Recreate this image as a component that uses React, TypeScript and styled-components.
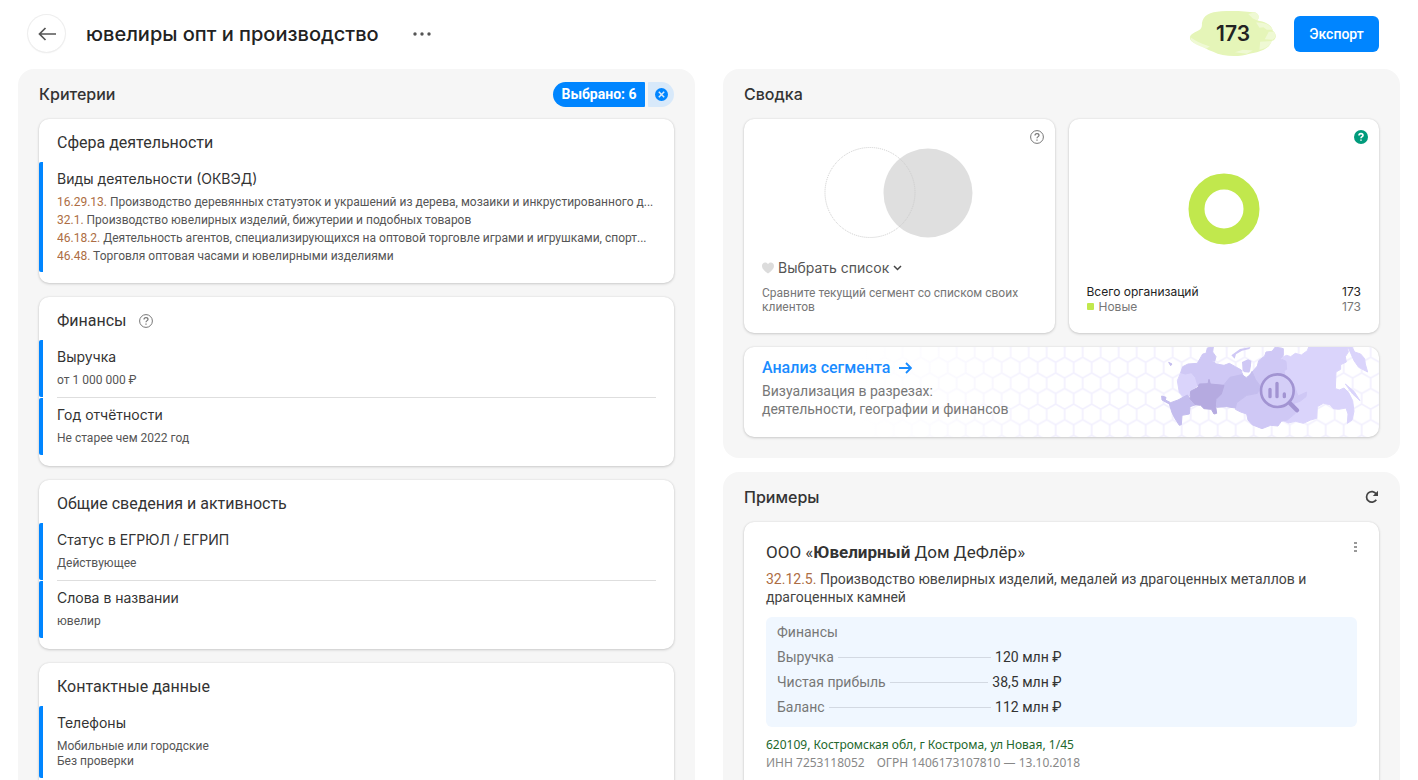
import React from "react";
import styled, { createGlobalStyle, css } from "styled-components";

const inter = `Inter, "Liberation Sans", sans-serif`;
const roboto = `Roboto, "Liberation Sans", sans-serif`;
const blue = "#0085ff";

const GlobalStyle = createGlobalStyle`
  *, *::before, *::after { box-sizing: border-box; }
  body { margin: 0; background: #fff; color: #333; font: 14px/18px ${roboto}; }
  h1, h2, h3, h4, p, dl, dd, ul { margin: 0; padding: 0; font-weight: 400; }
  ul { list-style: none; }
  button { border: 0; padding: 0; background: none; color: inherit; font: inherit; cursor: pointer; }
  svg { display: block; }
`;

const Page = styled.div`
  display: flex;
  flex-direction: column;
  height: 100vh;
  overflow: hidden;
`;

const Header = styled.header`
  display: flex;
  align-items: center;
  flex: none;
  height: 69px;
  padding: 0 39px 2px 28px;
`;

const BackButton = styled.button`
  display: grid;
  place-items: center;
  width: 37px;
  height: 37px;
  border-radius: 50%;
  box-shadow: 0 0 0 1px #eee, 0 1px 2px rgba(0, 0, 0, 0.08);
`;

const PageTitle = styled.h1`
  margin-left: 21px;
  font: 500 20px/28px ${inter};
  color: #222;
`;

const MoreButton = styled.button`
  display: grid;
  place-items: center;
  width: 32px;
  height: 32px;
  margin-left: 27px;
`;

const Count = styled.output`
  position: relative;
  display: grid;
  place-items: center;
  width: 88px;
  height: 47px;
  margin: 0 17px 0 auto;
  font: 600 21px/28px ${inter};
  color: #222;
`;

const CountBlob = styled.svg`
  position: absolute;
  inset: 0;
  z-index: -1;
`;

const ExportButton = styled.button`
  width: 85px;
  height: 36px;
  border-radius: 6px;
  background: ${blue};
  color: #fff;
  font-weight: 500;
`;

const Columns = styled.main`
  display: grid;
  grid-template-columns: 1fr 1fr;
  gap: 28px;
  flex: 1;
  min-height: 0;
  padding: 0 18px;
`;

const Column = styled.div`
  display: flex;
  flex-direction: column;
  gap: 14px;
  min-width: 0;
`;

const Panel = styled.section`
  flex: none;
  padding: 0 21px 21px;
  border-radius: 16px;
  background: #f6f6f6;
`;

const PanelHeader = styled.header`
  display: flex;
  align-items: center;
  justify-content: space-between;
  height: 50px;
`;

const PanelTitle = styled.h2`
  font: 500 16px/20px ${inter};
  color: #333;
`;

const Stack = styled.div`
  display: grid;
  gap: 14px;
`;

const cardSurface = css`
  border-radius: 10px;
  background: #fff;
  box-shadow: 0 0 2px rgba(0, 0, 0, 0.1), 0 1px 3px rgba(0, 0, 0, 0.16);
`;

const Card = styled.section`
  ${cardSurface}
  padding-bottom: 11px;
`;

const CardTitle = styled.h3`
  display: flex;
  align-items: center;
  gap: 12px;
  height: 43px;
  padding: 4px 18px 0;
  font-size: 16px;
  line-height: 20px;
`;

const Selection = styled.div`
  display: flex;
  gap: 3px;
  height: 25px;
`;

const SelectedButton = styled.button`
  width: 92px;
  border-radius: 13px 1px 1px 13px;
  background: ${blue};
  color: #fff;
  font-weight: 700;
`;

const ClearButton = styled.button`
  display: grid;
  place-items: center;
  width: 26px;
  border-radius: 1px 13px 13px 1px;
  background: #d8e9fa;
`;

const Criterion = styled.div<{ $dense?: boolean }>`
  padding: 7px 14px ${(p) => (p.$dense ? 7 : 9)}px;
  border-left: 4px solid ${blue};
  border-radius: 2px;
`;

const Divider = styled.hr`
  height: 1px;
  margin: 0 18px;
  border: 0;
  background: #dedede;
`;

const CriterionTitle = styled.h4`
  font: 14px/20px ${inter};
`;

const Values = styled.ul<{ $dense?: boolean }>`
  margin-top: ${(p) => (p.$dense ? 4 : 6)}px;
  font-size: 12px;
  line-height: ${(p) => (p.$dense ? 18 : 15)}px;
  color: #555;
`;

const Value = styled.li`
  overflow: hidden;
  text-overflow: ellipsis;
  white-space: nowrap;
`;

const Code = styled.span`
  color: #ad6d43;
`;

const HelpButton = styled.button`
  width: 14px;
  height: 14px;
`;

const SummaryGrid = styled.div`
  display: grid;
  grid-template-columns: 1fr 1fr;
  gap: 14px;
`;

const SummaryCard = styled.section`
  ${cardSurface}
  display: flex;
  flex-direction: column;
  height: 214px;
  padding: 11px 11px 18px 18px;
`;

const CornerRow = styled.div`
  display: flex;
  justify-content: flex-end;
`;

const Venn = styled.svg`
  align-self: center;
  margin: 3px 9px 0 0;
`;

const Donut = styled.svg`
  align-self: center;
  margin: 29px 7px 0 0;
`;

const ListButton = styled.button`
  display: flex;
  align-items: center;
  gap: 4px;
  margin-top: 19px;
  font: 14px/20px ${inter};
  color: #555;
`;

const Hint = styled.p`
  margin-top: 8px;
  font-size: 12px;
  line-height: 14px;
  color: #777;
`;

const Legend = styled.dl`
  margin: auto 7px 1px 0;
  font: 12px/15px ${inter};
`;

const LegendRow = styled.div<{ $muted?: boolean }>`
  display: flex;
  justify-content: space-between;
  color: ${(p) => (p.$muted ? "#777" : "#222")};
`;

const LegendName = styled.dt`
  display: flex;
  align-items: center;
  gap: 5px;
`;

const Swatch = styled.span`
  width: 7px;
  height: 7px;
  border-radius: 1px;
  background: #c1e84d;
`;

const Banner = styled.section`
  ${cardSurface}
  position: relative;
  overflow: hidden;
  height: 90px;
  padding: 11px 18px;
  color: #777;
`;

const BannerArt = styled.svg`
  position: absolute;
  top: 0;
  right: 0;
`;

const BannerBody = styled.div`
  position: relative;
`;

const BannerLink = styled.a`
  display: inline-flex;
  align-items: center;
  gap: 8px;
  margin-bottom: 4px;
  color: #1a8cff;
  font-size: 16px;
  font-weight: 500;
  line-height: 20px;
  text-decoration: none;
`;

const IconButton = styled.button`
  display: grid;
  place-items: center;
  width: 14px;
  height: 18px;
`;

const Company = styled.article`
  ${cardSurface}
  padding: 20px 22px 21px;
`;

const CompanyHead = styled.header`
  display: flex;
  justify-content: space-between;
  align-items: flex-start;
`;

const CompanyName = styled.h3`
  font-size: 17px;
  line-height: 20px;
`;

const MenuButton = styled.button`
  width: 4px;
  height: 10px;
`;

const Activity = styled.p`
  margin-top: 8px;
  color: #444;
`;

const Finance = styled.section`
  margin-top: 11px;
  padding: 5px 11px 7px;
  border-radius: 6px;
  background: #f0f7ff;
`;

const FinanceTitle = styled.h4`
  margin-bottom: 3px;
  line-height: 20px;
  color: #777;
`;

const FinanceList = styled.dl`
  width: 50%;
  line-height: 25px;
`;

const FinanceRow = styled.div`
  display: flex;
  align-items: center;
  gap: 4px;
`;

const FinanceName = styled.dt`
  color: #777;
`;

const Leader = styled.span`
  flex: 1;
  height: 1px;
  background: #d3d9e2;
`;

const Contacts = styled.div`
  margin-top: 9px;
  font: 12px/18px "Noto Sans", sans-serif;
`;

const Address = styled.p`
  color: #22672c;
`;

const Registry = styled.p`
  display: flex;
  gap: 12px;
  color: #888;
`;

function Help({ filled }: { filled?: boolean }) {
  return (
    <HelpButton type="button" aria-label="Подсказка">
      <svg width="14" height="14" viewBox="0 0 14 14" fill="none">
        <circle cx="7" cy="7" r={filled ? 7 : 6.4} fill={filled ? "#009b7c" : "none"} stroke={filled ? "none" : "#777"} />
        <path
          d="M5 5.5C5 4.3 5.8 3.6 7 3.6S9 4.3 9 5.4C9 6.6 7 6.7 7 8.3M7 9.5v1.3"
          stroke={filled ? "#fff" : "#777"}
          strokeWidth={filled ? 1.6 : 1.2}
        />
      </svg>
    </HelpButton>
  );
}

type Item = { title: string; dense?: boolean; values: { code?: string; text: string }[] };

const groups: { title: string; help?: boolean; items: Item[] }[] = [
  {
    title: "Сфера деятельности",
    items: [
      {
        title: "Виды деятельности (ОКВЭД)",
        dense: true,
        values: [
          { code: "16.29.13.", text: "Производство деревянных статуэток и украшений из дерева, мозаики и инкрустированного д..." },
          { code: "32.1.", text: "Производство ювелирных изделий, бижутерии и подобных товаров" },
          { code: "46.18.2.", text: "Деятельность агентов, специализирующихся на оптовой торговле играми и игрушками, спорт..." },
          { code: "46.48.", text: "Торговля оптовая часами и ювелирными изделиями" },
        ],
      },
    ],
  },
  {
    title: "Финансы",
    help: true,
    items: [
      { title: "Выручка", values: [{ text: "от 1 000 000 ₽" }] },
      { title: "Год отчётности", values: [{ text: "Не старее чем 2022 год" }] },
    ],
  },
  {
    title: "Общие сведения и активность",
    items: [
      { title: "Статус в ЕГРЮЛ / ЕГРИП", values: [{ text: "Действующее" }] },
      { title: "Слова в названии", values: [{ text: "ювелир" }] },
    ],
  },
  {
    title: "Контактные данные",
    items: [{ title: "Телефоны", values: [{ text: "Мобильные или городские" }, { text: "Без проверки" }] }],
  },
];

const finance = [
  ["Выручка", "120 млн ₽"],
  ["Чистая прибыль", "38,5 млн ₽"],
  ["Баланс", "112 млн ₽"],
];

function SegmentArt() {
  return (
    <BannerArt width="520" height="90" viewBox="-633 21 1560 270" aria-hidden="true">
      <defs>
        <pattern id="hex" x="11" y="51.8" width="54" height="93.6" patternUnits="userSpaceOnUse">
          <path
            d="M27 0 54 15.6V46.8L27 62.4 0 46.8V15.6ZM27 62.4V93.6"
            fill="none"
            stroke="#f2f0fe"
            strokeWidth="5"
          />
        </pattern>
        <linearGradient id="fade" x1="-633" x2="-30" y1="0" y2="0" gradientUnits="userSpaceOnUse">
          <stop offset="0" stopColor="#fff" />
          <stop offset="0.3" stopColor="#fff" stopOpacity="0.8" />
          <stop offset="1" stopColor="#fff" stopOpacity="0" />
        </linearGradient>
      </defs>
      <rect x="-633" y="21" width="1560" height="270" fill="url(#hex)" />
      <rect x="-633" y="21" width="1560" height="270" fill="url(#fade)" />
      <path
        fill="#dad4fb"
        stroke="#dad4fb"
        strokeWidth="3"
        d="M322 122 332 98 372 95 400 126 385 136 366 150 358 168 340 171 328 158ZM636 52 650 46 662 50 676 40 694 45 712 32 716 21H832L835 36 826 50 829 66 812 74 812 88 798 96 796 146 808 150 822 144 836 158 848 182 852 214 846 240 832 250 834 222 828 204 806 208 790 206 780 194 760 190 742 200 740 235 722 240 700 250 676 244 655 249 640 242 632 150ZM834 21H846L854 36 872 42 884 56 886 72 893 96 866 82 852 62ZM826 132 852 154 870 182 848 162Z"
      />
      <path
        fill="#cfc8f5"
        stroke="#cfc8f5"
        strokeWidth="3"
        d="M332 98 338 80 354 72 382 70 390 56 398 42 408 40 412 24 430 21 428 36 438 50 434 64 422 60 440 72 462 76 478 70 496 80 514 90 520 110 482 116 466 138 422 134 396 134 384 138 376 112 364 98 346 102ZM548 94 562 78 566 62 584 48 588 36 606 34 616 21 640 26 640 46 632 56 648 64 650 88 642 92 648 120 670 130 684 168 710 156 708 170 690 184 672 190 676 220 652 240 634 244 624 258 602 256 576 266 546 254 534 240 530 222 512 216 496 208 500 188 530 166 560 160 570 138 556 118Z"
      />
      <path
        fill="#c4bdee"
        stroke="#c4bdee"
        strokeWidth="3"
        d="M462 134 480 112 516 104 530 114 546 94 556 118 572 140 562 160 530 166 500 188 496 204 470 200 440 202 434 184 454 160ZM275 168 288 172 286 180 302 188 324 180 352 165 364 182 378 194 360 200 358 222 336 226 334 254 328 256 314 234 306 218 298 192 276 180ZM296 67 306 72 302 77Z"
      />
      <path
        fill="#cfc8f5"
        d="M484 46 510 27 542 21 538 27 516 32 498 43 494 56ZM516 66 534 58 544 62 542 98 518 96Z"
      />
      <path
        fill="#b5aae0"
        stroke="#b5aae0"
        strokeWidth="3"
        d="M362 154 384 142 388 132 414 131 417 118 421 132 462 136 454 162 438 178 436 192 440 220 432 222 424 208 402 206 392 196 376 194 360 176Z"
      />
      <path fill="none" stroke="#fff" strokeWidth="4" d="M518 94Q532 118 542 94L546 72" />
      <circle cx="622" cy="152" r="49" fill="#dad4fb" fillOpacity=".45" stroke="#a294d2" strokeWidth="8" />
      <path d="M660 190 681 211" stroke="#a294d2" strokeWidth="13" strokeLinecap="round" />
      <path d="M600 148V170M621 130V170M643 162V170" stroke="#a294d2" strokeWidth="10" strokeLinecap="round" />
    </BannerArt>
  );
}

export default function App() {
  return (
    <Page>
      <GlobalStyle />
      <Header>
        <BackButton type="button" aria-label="Назад">
          <svg width="18" height="14" viewBox="0 0 18 14" fill="none" stroke="#555" strokeWidth="1.7">
            <path d="M18 7H1.500M7.500 1 1.500 7l6 6" />
          </svg>
        </BackButton>
        <PageTitle>ювелиры опт и производство</PageTitle>
        <MoreButton type="button" aria-label="Ещё">
          <svg width="18" height="4" viewBox="0 0 18 4" fill="#555">
            <circle cx="2" cy="2" r="1.700" />
            <circle cx="9" cy="2" r="1.700" />
            <circle cx="16" cy="2" r="1.700" />
          </svg>
        </MoreButton>
        <Count>
          <CountBlob width="88" height="47" viewBox="88 30 264 142" aria-hidden="true">
            <path
              fill="#e5f5b8"
              d="M126 70C130 46 150 36 184 34 220 31 262 34 286 37 300 42 300 54 294 62 318 66 338 76 340 92 354 104 352 120 336 124 332 148 300 158 270 162 240 172 190 172 160 156 140 150 126 138 112 132 86 126 84 108 100 100 114 92 128 92 126 70Z"
            />
            <path
              fill="#eff9d4"
              d="M266 42 288 37Q304 46 294 62L280 56ZM290 68Q328 66 340 90L322 90 312 82 300 84ZM302 126 338 124Q330 144 300 150ZM226 158 250 150 280 152 262 162ZM92 112Q112 128 150 140L140 146Q88 132 92 112ZM328 96 344 96Q354 112 340 120L316 118Z"
            />
          </CountBlob>
          173
        </Count>
        <ExportButton type="button">Экспорт</ExportButton>
      </Header>
      <Columns>
        <Column>
          <Panel>
            <PanelHeader>
              <PanelTitle>Критерии</PanelTitle>
              <Selection>
                <SelectedButton type="button">Выбрано: 6</SelectedButton>
                <ClearButton type="button" aria-label="Сбросить">
                  <svg width="13" height="13" viewBox="0 0 13 13">
                    <circle cx="6.5" cy="6.5" r="6.5" fill={blue} />
                    <path d="m3.8 3.8 5.4 5.4m0-5.4L3.8 9.2" stroke="#d8e9fa" strokeWidth="1.5" />
                  </svg>
                </ClearButton>
              </Selection>
            </PanelHeader>
            <Stack>
              {groups.map((group) => (
                <Card key={group.title}>
                  <CardTitle>
                    {group.title}
                    {group.help && <Help />}
                  </CardTitle>
                  {group.items.map((item, i) => (
                    <React.Fragment key={item.title}>
                      {i > 0 && <Divider />}
                      <Criterion $dense={item.dense}>
                        <CriterionTitle>{item.title}</CriterionTitle>
                        <Values $dense={item.dense}>
                          {item.values.map((v) => (
                            <Value key={v.text}>
                              {v.code && <Code>{v.code} </Code>}
                              {v.text}
                            </Value>
                          ))}
                        </Values>
                      </Criterion>
                    </React.Fragment>
                  ))}
                </Card>
              ))}
            </Stack>
          </Panel>
        </Column>
        <Column>
          <Panel>
            <PanelHeader>
              <PanelTitle>Сводка</PanelTitle>
            </PanelHeader>
            <Stack>
              <SummaryGrid>
                <SummaryCard>
                  <CornerRow>
                    <Help />
                  </CornerRow>
                  <Venn width="150" height="92" viewBox="0 0 150 92" aria-hidden="true">
                    <circle cx="105" cy="46" r="44.5" fill="#dfdfdf" />
                    <circle cx="47" cy="45.5" r="45" fill="none" stroke="#ccc" strokeDasharray="1 1" />
                  </Venn>
                  <ListButton type="button">
                    <svg width="12" height="12" viewBox="0 0 12 12" fill="#dcdcdc">
                      <path d="M6 11.6C2.4 8.8 0 6.6 0 3.9 0 2 1.4.6 3.2.6 4.4.6 5.4 1.2 6 2.2 6.6 1.2 7.6.6 8.8.6 10.6.6 12 2 12 3.9 12 6.6 9.6 8.8 6 11.6Z" />
                    </svg>
                    Выбрать список
                    <svg width="9" height="6" viewBox="0 0 9 6" fill="none" stroke="#444" strokeWidth="1.5">
                      <path d="m1 1 3.5 3.5L8 1" />
                    </svg>
                  </ListButton>
                  <Hint>Сравните текущий сегмент со списком своих клиентов</Hint>
                </SummaryCard>
                <SummaryCard>
                  <CornerRow>
                    <Help filled />
                  </CornerRow>
                  <Donut width="72" height="72" viewBox="0 0 72 72" aria-hidden="true">
                    <circle cx="36" cy="36" r="27.5" fill="none" stroke="#c1e84d" strokeWidth="16" />
                  </Donut>
                  <Legend>
                    <LegendRow>
                      <LegendName>Всего организаций</LegendName>
                      <dd>173</dd>
                    </LegendRow>
                    <LegendRow $muted>
                      <LegendName>
                        <Swatch />
                        Новые
                      </LegendName>
                      <dd>173</dd>
                    </LegendRow>
                  </Legend>
                </SummaryCard>
              </SummaryGrid>
              <Banner>
                <SegmentArt />
                <BannerBody>
                  <BannerLink href="#analysis">
                    Анализ сегмента
                    <svg width="13" height="12" viewBox="0 0 13 12" fill="none" stroke="currentColor" strokeWidth="1.9">
                      <path d="M0 6h11.5M7 1l5 5-5 5" />
                    </svg>
                  </BannerLink>
                  <p>
                    Визуализация в разрезах:
                    <br />
                    деятельности, географии и финансов
                  </p>
                </BannerBody>
              </Banner>
            </Stack>
          </Panel>
          <Panel>
            <PanelHeader>
              <PanelTitle>Примеры</PanelTitle>
              <IconButton type="button" aria-label="Обновить">
                <svg width="14" height="14" viewBox="0 0 14 14" fill="none" stroke="#444" strokeWidth="1.7">
                  <path d="M11.3 9.8A5.3 5.3 0 1 1 11.3 4" />
                  <path d="M13 .8V6H7.8Z" fill="#444" stroke="none" />
                </svg>
              </IconButton>
            </PanelHeader>
            <Company>
              <CompanyHead>
                <CompanyName>
                  ООО «<b>Ювелирный</b> Дом ДеФлёр»
                </CompanyName>
                <MenuButton type="button" aria-label="Действия">
                  <svg width="4" height="10" viewBox="0 0 4 10" fill="#999">
                    <path d="M1 0h3v2H1zM1 4h3v2H1zM1 8h3v2H1z" />
                  </svg>
                </MenuButton>
              </CompanyHead>
              <Activity>
                <Code>32.12.5.</Code> Производство ювелирных изделий, медалей из драгоценных металлов и
                <br />
                драгоценных камней
              </Activity>
              <Finance>
                <FinanceTitle>Финансы</FinanceTitle>
                <FinanceList>
                  {finance.map(([name, value]) => (
                    <FinanceRow key={name}>
                      <FinanceName>{name}</FinanceName>
                      <Leader />
                      <dd>{value}</dd>
                    </FinanceRow>
                  ))}
                </FinanceList>
              </Finance>
              <Contacts>
                <Address>620109, Костромская обл, г Кострома, ул Новая, 1/45</Address>
                <Registry>
                  <span>ИНН 7253118052</span>
                  <span>ОГРН 1406173107810 — 13.10.2018</span>
                </Registry>
              </Contacts>
            </Company>
          </Panel>
        </Column>
      </Columns>
    </Page>
  );
}
